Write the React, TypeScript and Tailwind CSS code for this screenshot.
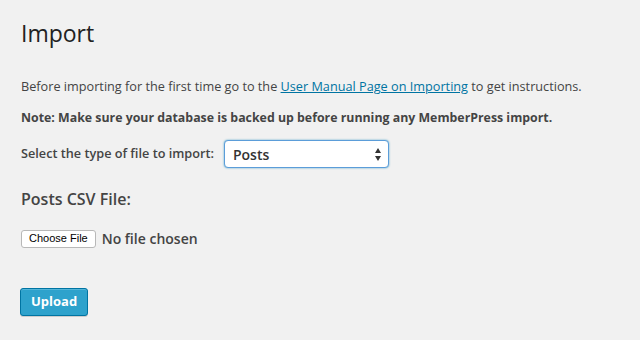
export default function App() {
  return (
    <div className="h-[340px] w-[640px] overflow-hidden bg-[#f1f1f1] px-[21px] text-[#444] [font-family:'Open_Sans',sans-serif]">
      <h1 className="pt-[15px] text-[23px] leading-[36px] font-normal text-[#222]">Import</h1>

      <p className="mt-[25px] text-[12.7px] leading-[20px]">
        Before importing for the first time go to the{" "}
        <a href="#" className="text-[#0074a2] underline">User Manual Page on Importing</a> to get instructions.
      </p>
      <p className="mt-[12px] text-[12.35px] leading-[20px] font-bold">
        Note: Make sure your database is backed up before running any MemberPress import.
      </p>

      <div className="mt-[12px] flex items-center gap-[10px]">
        <span className="text-[12.7px] font-semibold">Select the type of file to import:</span>
        <div className="flex h-[28px] w-[165px] items-center justify-between rounded-[4px] border border-[#5b9dd9] bg-white pl-[8px] pr-[7px] shadow-[0_0_2px_rgba(30,140,190,0.8)]">
          <span className="text-[14px] font-semibold text-[#333]">Posts</span>
          <svg width="6" height="13" viewBox="0 0 6 13" className="text-[#333]">
            <path d="M3 0 L6 5 L0 5 Z M0 8 L6 8 L3 13 Z" fill="currentColor" />
          </svg>
        </div>
      </div>

      <h3 className="mt-[19px] text-[16px] leading-[24px] font-semibold">Posts CSV File:</h3>

      <div className="mt-[17px] flex items-center gap-[6px]">
        <button className="h-[18px] rounded-[3px] border border-[#b8b8b8] bg-white px-[7px] text-[11px] leading-none text-black [font-family:'Liberation_Sans',sans-serif]">
          Choose File
        </button>
        <span className="text-[14px] font-semibold">No file chosen</span>
      </div>

      <button className="-ml-px mt-[39px] h-[28px] rounded-[3px] border border-[#0074a2] bg-[#2ea2cc] px-[10px] text-[13px] font-bold text-white shadow-[inset_0_1px_0_rgba(120,200,230,0.5),0_1px_0_rgba(0,0,0,0.15)]">
        Upload
      </button>
    </div>
  );
}
